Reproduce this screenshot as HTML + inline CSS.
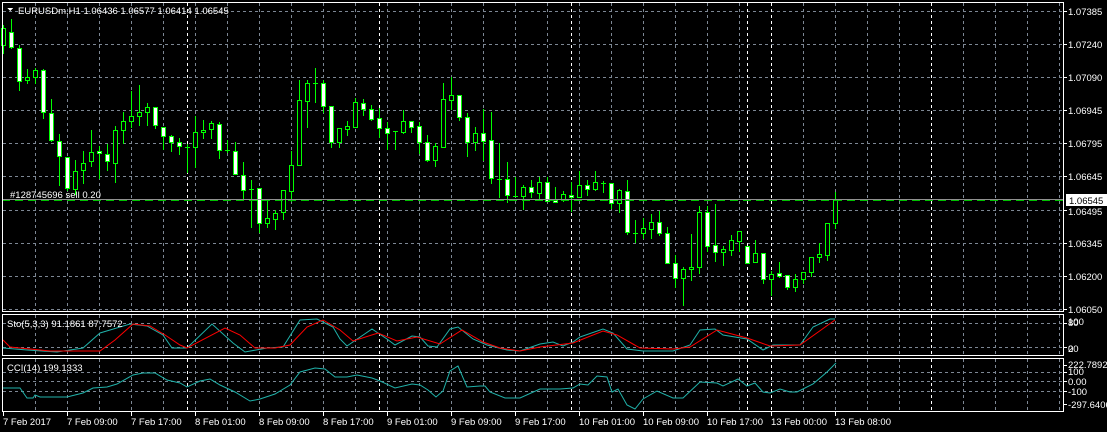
<!DOCTYPE html>
<html><head><meta charset="utf-8"><style>
html,body{margin:0;padding:0;background:#000;width:1107px;height:432px;overflow:hidden}
svg{display:block}
text{font-family:"Liberation Sans",sans-serif;font-size:9.5px;fill:#fff}
</style></head><body>
<svg id="s" width="1107" height="432" xmlns="http://www.w3.org/2000/svg" shape-rendering="crispEdges">
<rect width="1107" height="432" fill="#000"/>
<g id="grid"></g>
<g id="cand"></g>
<line x1="2" y1="199.5" x2="1063" y2="199.5" stroke="#909090"/>
<line x1="2" y1="200.5" x2="1063" y2="200.5" stroke="#00c000" stroke-dasharray="8,5"/>
<g id="ind" shape-rendering="auto"></g>
<rect x="2.5" y="2.5" width="1061" height="309" fill="none" stroke="#fff"/>
<rect x="2.5" y="314.5" width="1061" height="41" fill="none" stroke="#fff"/>
<rect x="2.5" y="358.5" width="1061" height="53" fill="none" stroke="#fff"/>
<polygon points="7,8 13,8 10,11" fill="#fff"/>
<text x="18" y="14">EURUSDm,H1  1.06436 1.06577 1.06414 1.06545</text>
<text x="10" y="198">#128745696 sell 0.20</text>
<text x="7" y="327">Sto(5,3,3) 91.1861 87.7572</text>
<text x="7" y="371">CCI(14) 199.1333</text>
<g id="axis"></g>
<rect x="1066" y="194" width="41" height="12" fill="#fff"/>
<text x="1069" y="204" style="fill:#000">1.06545</text>
<text x="1068" y="15">1.07385</text>
<text x="1068" y="48">1.07240</text>
<text x="1068" y="81">1.07090</text>
<text x="1068" y="114">1.06945</text>
<text x="1068" y="147">1.06795</text>
<text x="1068" y="180">1.06645</text>
<text x="1068" y="215">1.06495</text>
<text x="1068" y="247">1.06345</text>
<text x="1068" y="280">1.06200</text>
<text x="1068" y="313">1.06050</text>
<text x="1068" y="325">100</text>
<text x="1068" y="326">80</text>
<text x="1068" y="352">20</text>
<text x="1068" y="352">0</text>
<text x="1068" y="368">222.7892</text>
<text x="1068" y="375">100</text>
<text x="1068" y="385">0.00</text>
<text x="1068" y="395">-100</text>
<text x="1068" y="408">-297.6406</text>
<text x="3" y="425">7 Feb 2017</text>
<text x="67" y="425">7 Feb 09:00</text>
<text x="131" y="425">7 Feb 17:00</text>
<text x="195" y="425">8 Feb 01:00</text>
<text x="259" y="425">8 Feb 09:00</text>
<text x="323" y="425">8 Feb 17:00</text>
<text x="387" y="425">9 Feb 01:00</text>
<text x="451" y="425">9 Feb 09:00</text>
<text x="515" y="425">9 Feb 17:00</text>
<text x="579" y="425">10 Feb 01:00</text>
<text x="643" y="425">10 Feb 09:00</text>
<text x="707" y="425">10 Feb 17:00</text>
<text x="771" y="425">13 Feb 00:00</text>
<text x="835" y="425">13 Feb 08:00</text>
</svg>
<script>
var NS="http://www.w3.org/2000/svg";
function el(p,t,a){var e=document.createElementNS(NS,t);for(var k in a)e.setAttribute(k,a[k]);p.appendChild(e);return e;}
var g=document.getElementById('grid');
var GC="#7d8794";
[11,44,77,110,143,176,210,243,276,309].forEach(function(y){el(g,'line',{x1:3,x2:1063,y1:y+.5,y2:y+.5,stroke:GC,'stroke-dasharray':'3,3'});});
[323,347].forEach(function(y){el(g,'line',{x1:3,x2:1063,y1:y+.5,y2:y+.5,stroke:GC,'stroke-dasharray':'3,3'});});
[372,381,391].forEach(function(y){el(g,'line',{x1:3,x2:1063,y1:y+.5,y2:y+.5,stroke:GC,'stroke-dasharray':'3,3'});});
var panels=[[3,311],[315,355],[359,411]];
for(var x=35;x<1063;x+=32){panels.forEach(function(p){el(g,'line',{x1:x+.5,x2:x+.5,y1:p[0],y2:p[1],stroke:GC,'stroke-dasharray':'3,3'});});}
[187,379,571,747,771,931].forEach(function(x){panels.forEach(function(p){el(g,'line',{x1:x+.5,x2:x+.5,y1:p[0],y2:p[1],stroke:'#fff','stroke-dasharray':'3,3'});});});
var ax=document.getElementById('axis');
for(var x=3;x<=835;x+=64)el(ax,'line',{x1:x+.5,x2:x+.5,y1:411,y2:416,stroke:'#fff'});
[11,44,77,110,143,176,210,243,276,309,323,347,365,372,381,391,404].forEach(function(y){el(ax,'line',{x1:1063,x2:1067,y1:y+.5,y2:y+.5,stroke:'#fff'});});
var C=[
['b',28,45,25,53],['w',32,47,19,48],['w',48,81,45,90],['b',77,80,69,83],['b',70,77,68,83],['w',70,112,69,118],['w',113,140,99,141],['w',141,156,134,185],['w',157,188,157,190],['b',171,189,160,194],
['b',163,170,151,183],['b',152,161,130,166],['w',151,153,146,178],['w',154,161,144,170],['b',130,163,126,182],['b',121,130,112,143],['b',116,121,91,127],['b',112,116,85,125],['b',107,112,103,125],['w',107,125,107,128],
['w',127,136,127,149],['w',136,142,135,151],['w',142,146,138,154],['d',147,147,144,172],['b',132,147,116,167],['b',130,132,120,138],['b',123,129,121,138],['w',124,150,122,158],['d',150,150,140,152],['w',151,174,142,174],
['w',175,190,162,200],['d',189,189,180,227],['w',188,223,188,232],['b',218,223,200,227],['b',213,219,210,229],['b',190,212,190,219],['b',165,191,151,201],['b',100,165,80,165],['b',83,101,80,127],['d',83,83,68,102],
['w',83,106,80,112],['w',106,142,106,147],['b',128,142,128,147],['b',126,129,121,135],['b',102,127,98,127],['w',103,109,99,115],['w',109,119,105,120],['w',118,128,108,137],['w',128,133,122,149],['d',131,131,131,149],
['b',121,132,110,133],['w',121,127,121,132],['w',126,142,122,153],['w',142,160,135,161],['b',146,160,143,166],['b',99,147,83,147],['b',95,100,77,109],['w',95,117,95,120],['w',117,142,113,156],['b',133,142,127,150],
['w',133,141,109,160],['w',140,178,112,183],['d',179,179,143,197],['w',179,195,162,202],['d',196,196,177,196],['b',187,196,185,209],['w',187,192,180,197],['b',182,193,177,198],['w',182,201,177,201],['w',200,201,187,202],
['b',194,200,191,201],['w',195,197,182,211],['b',185,197,171,197],['w',185,189,180,195],['b',182,189,171,190],['d',183,183,181,192],['w',183,203,183,208],['b',190,203,189,212],['w',191,232,180,234],['d',233,233,220,242],
['b',228,233,218,238],['b',222,229,214,238],['w',222,233,211,235],['w',233,263,227,263],['w',263,278,255,287],['b',269,278,267,305],['b',267,269,234,280],['b',212,267,206,273],['w',212,246,206,251],['w',245,252,204,261],
['b',249,252,246,265],['b',240,250,235,255],['b',231,241,231,251],['w',246,263,246,263],['b',253,262,240,262],['w',253,279,253,283],['b',274,279,271,295],['w',273,276,262,277],['w',275,287,275,289],['b',279,287,274,291],
['b',272,279,272,283],['b',257,272,257,276],['b',254,257,243,262],['b',223,255,223,260],['b',199,223,192,228]];
var cg=document.getElementById('cand');
C.forEach(function(c,i){var cx=3+8*i;
 el(cg,'line',{x1:cx+.5,x2:cx+.5,y1:c[3],y2:c[4]+1,stroke:'#00ff00'});
 if(c[0]=='d'){el(cg,'line',{x1:cx-2,x2:cx+3,y1:c[1]+.5,y2:c[1]+.5,stroke:'#00ff00'});}
 else{var h=Math.max(c[2]-c[1],2);el(cg,'rect',{x:cx-1.5,y:c[1]+.5,width:4,height:h,fill:c[0]=='w'?'#fff':'#000',stroke:'#00ff00'});}
});
var ind=document.getElementById('ind');
function pl(pts,col){el(ind,'polyline',{points:pts.map(function(p){return p.join(',')}).join(' '),fill:'none',stroke:col,'stroke-width':1});}
var cy=[[3,348],[27,350],[57,352],[83,348],[100,333],[130,324],[147,326],[163,335],[172,348],[187,348],[212,324],[233,343],[245,352],[267,348],[283,347],[300,320],[317,319],[333,327],[340,339],[347,346],[372,329],[387,339],[395,345],[412,336],[420,337],[428,346],[437,347],[450,329],[458,327],[473,339],[487,345],[507,350],[520,351],[540,344],[553,342],[563,346],[573,342],[580,337],[603,329],[613,333],[627,349],[643,351],[673,351],[690,345],[700,330],[715,329],[723,335],[747,339],[763,350],[773,345],[800,345],[813,327],[830,319],[835,319]];
var rd=[[3,340],[10,347],[50,351],[100,351],[115,340],[133,324],[150,326],[165,335],[180,345],[187,348],[225,328],[240,335],[255,348],[275,348],[290,345],[307,327],[323,320],[340,330],[353,341],[378,333],[397,341],[417,337],[440,344],[462,330],[483,342],[500,348],[520,351],[540,347],[573,343],[603,331],[617,335],[640,348],[673,349],[690,347],[717,330],[747,338],[770,346],[800,345],[835,320]];
pl(cy,'#20b2aa');pl(rd,'#ff0000');
var cci=[[3,388],[20,388],[27,398],[33,398],[35,395],[40,397],[67,397],[83,393],[93,388],[107,387],[117,384],[133,375],[143,373],[155,373],[167,380],[180,383],[187,387],[200,381],[210,379],[220,385],[235,392],[250,401],[260,399],[275,394],[290,385],[300,372],[315,368],[325,369],[335,377],[347,377],[357,375],[372,378],[380,381],[395,388],[412,384],[420,385],[428,390],[436,397],[443,391],[450,371],[458,366],[467,387],[480,386],[485,386],[490,392],[505,398],[520,398],[540,389],[560,389],[573,388],[580,384],[588,385],[597,376],[607,377],[612,392],[618,389],[627,405],[635,409],[643,399],[657,391],[673,398],[683,398],[700,382],[717,383],[723,386],[738,379],[747,386],[755,383],[763,392],[770,393],[780,389],[790,392],[797,392],[813,384],[827,372],[836,363]];
pl(cci,'#20b2aa');
</script>
</body></html>
